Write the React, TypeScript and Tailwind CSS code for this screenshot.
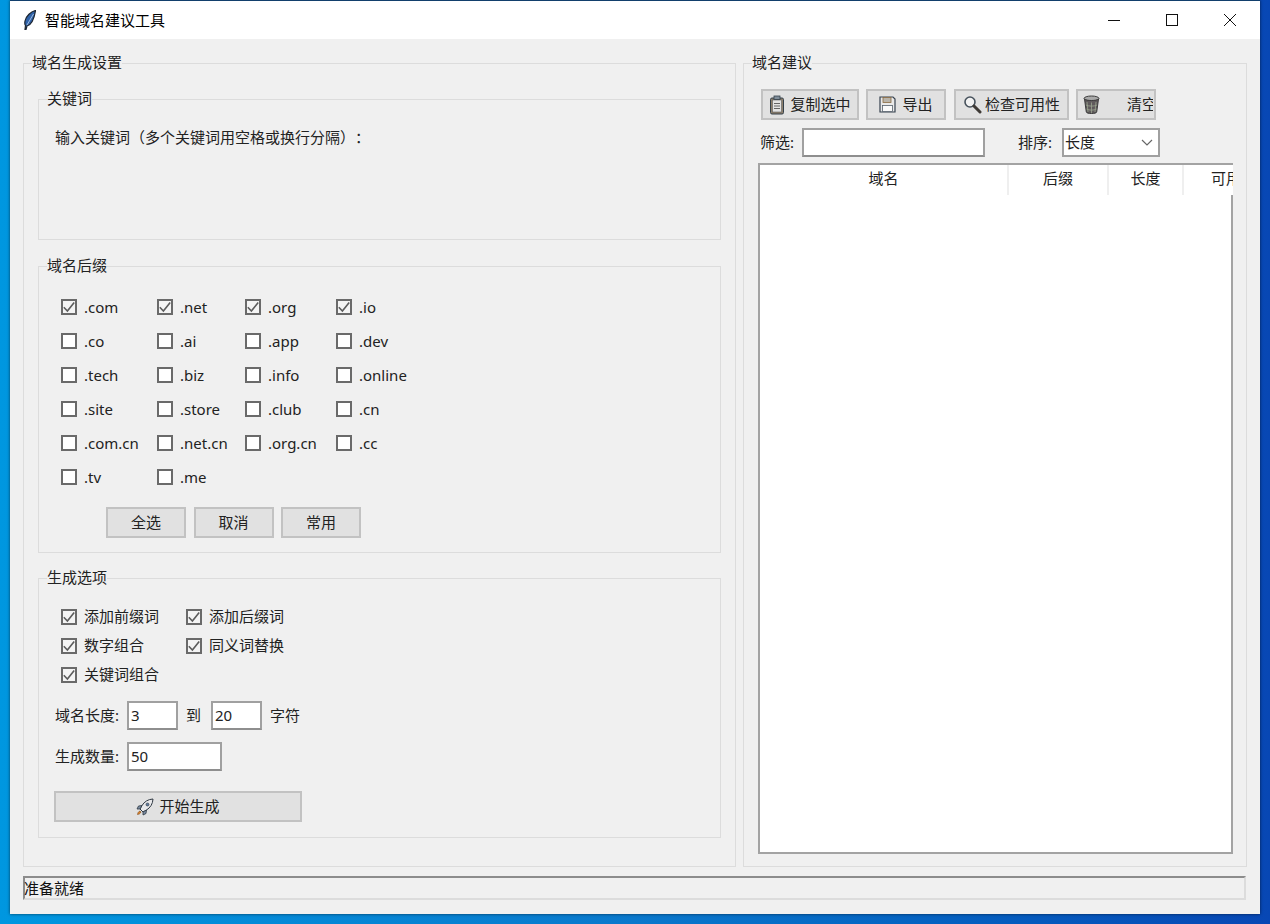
const FONT = { fontFamily: '"Noto Sans", "Noto Sans CJK SC", sans-serif' };

const SUFFIXES = [
  [".com", true], [".net", true], [".org", true], [".io", true],
  [".co", false], [".ai", false], [".app", false], [".dev", false],
  [".tech", false], [".biz", false], [".info", false], [".online", false],
  [".site", false], [".store", false], [".club", false], [".cn", false],
  [".com.cn", false], [".net.cn", false], [".org.cn", false], [".cc", false],
  [".tv", false], [".me", false],
] as [string, boolean][];

const Group = ({ title, className, children }: { title: string; className: string; children?: React.ReactNode }) => (
  <div className={`relative border border-[#dcdcdc] ${className}`}>
    <span className="absolute -top-[12px] left-2 bg-[#f0f0f0] text-[15px] leading-5 text-[#222]">{title}</span>
    {children}
  </div>
);

const Check = ({ label, checked }: { label: string; checked: boolean }) => (
  <label className="flex items-center gap-[7px] text-[15px] text-[#222]">
    <span className={`flex h-4 w-4 shrink-0 items-center justify-center border-2 border-[#6a6a6a] ${checked ? "bg-[#f4f4f4]" : "bg-white"}`}>
      {checked && (
        <svg width="12" height="12" viewBox="0 0 12 12" fill="none" stroke="#5c5c5c" strokeWidth="1.6">
          <path d="M.8 6.200 4.400 10 11.200 1.600" />
        </svg>
      )}
    </span>
    {label}
  </label>
);

const Btn = ({ className, children }: { className: string; children: React.ReactNode }) => (
  <div className={`flex items-center justify-center border-2 border-[#c2c2c2] bg-[#e1e1e1] text-[15px] text-[#222] ${className}`}>{children}</div>
);

const Input = ({ value, className }: { value?: string; className: string }) => (
  <div className={`flex items-center border-2 border-[#a0a0a0] border-b-[#8e8e8e] bg-white pl-[2px] text-[15px] text-[#222] ${className}`}>{value}</div>
);

const Feather = () => (
  <svg width="12" height="20" viewBox="0 0 12 20">
    <path d="M11.500 .5C7 1.500 2 6 1 11c-.4 2-.2 3.500.5 4.500L1 19.500h1l1-3.500c3.500-1 7-6 8.500-15.500z" fill="#2f62a8" stroke="#1c2530" strokeWidth="1.200" />
    <path d="M9.500 4 3 15" stroke="#9dbbe2" strokeWidth="1" />
  </svg>
);

const ClipboardIcon = () => (
  <svg width="16" height="20" viewBox="0 0 16 20">
    <rect x="1.500" y="3" width="13" height="16" rx="1.500" fill="#8d7f6c" stroke="#34404a" />
    <rect x="3.500" y="5" width="9" height="12" fill="#e4e4e4" stroke="#5f5f5f" strokeWidth=".6" />
    <rect x="5" y="1" width="6" height="3.500" fill="#7f8d99" stroke="#34404a" strokeWidth=".8" />
    <path d="M5 8.500h6M5 11h6M5 13.500h6" stroke="#555" strokeWidth=".9" />
  </svg>
);

const SaveIcon = () => (
  <svg width="17" height="17" viewBox="0 0 17 17">
    <path d="M1 1h13l2 2v13H1z" fill="#e9e9e9" stroke="#36424f" strokeWidth="1.200" />
    <rect x="4" y="1.500" width="8" height="5" fill="#b9b4aa" stroke="#8a6a40" strokeWidth=".8" />
    <rect x="3.500" y="9.500" width="10" height="6" fill="#fafafa" stroke="#55606c" strokeWidth=".8" />
  </svg>
);

const SearchIcon = () => (
  <svg width="19" height="19" viewBox="0 0 19 19">
    <circle cx="7" cy="7" r="5" fill="#f2f2f2" stroke="#47525c" strokeWidth="1.600" />
    <path d="M11 11l6 6" stroke="#3f3a36" strokeWidth="3" strokeLinecap="round" />
  </svg>
);

const TrashIcon = () => (
  <svg width="17" height="19" viewBox="0 0 17 19">
    <ellipse cx="8.500" cy="3.500" rx="7.500" ry="2.500" fill="#a9a9a9" stroke="#3c3c3c" />
    <path d="M1.500 4l1.800 13c.2 1 2.500 1.500 5.200 1.500s5-.5 5.200-1.500L15.500 4c-2 2-12 2-14 0z" fill="#5f5a5c" stroke="#3c3c3c" />
    <path d="M4 7l1 10M8.500 7.500V18M13 7l-1 10M3 10c3 1.500 8 1.500 11 0M3.500 14c3 1.500 7 1.500 10 0" stroke="#9aa58f" strokeWidth=".8" fill="none" />
  </svg>
);

const RocketIcon = () => (
  <svg width="18" height="18" viewBox="0 0 18 18">
    <path d="M17 1c-5 .3-8.500 2.500-11 6.500L4 11l3 3 3.500-2C14.500 9.500 16.700 6 17 1z" fill="#e8e8ea" stroke="#2f3842" />
    <circle cx="11.500" cy="6.500" r="1.500" fill="#5f7a9c" stroke="#2f3842" strokeWidth=".6" />
    <path d="M6 7.500 2.500 8 1 11l3 0zM10.500 12l-.5 3.500L7 17l0-3z" fill="#7d8ea4" stroke="#2f3842" strokeWidth=".8" />
    <path d="M4 13c-1.500.5-2.300 1.800-2.500 3.500C3.200 16.300 4.500 15.500 5 14z" fill="#d9822b" stroke="#7a4a20" strokeWidth=".6" />
  </svg>
);

export default function App() {
  return (
    <div className="h-[924px] w-[1270px] overflow-hidden bg-gradient-to-r from-[#0097e0] via-[#0a78cc] to-[#0847b4] pl-[10px]" style={FONT}>
      <div className="flex h-[914px] w-[1250px] flex-col border-t border-[#123f6c] bg-[#f0f0f0] shadow-[0_0_3px_rgba(0,0,0,0.6)]">
        {/* title bar */}
        <div className="flex h-[38px] shrink-0 items-center bg-white">
          <div className="ml-[14px] mr-[9px] flex w-3 justify-center"><Feather /></div>
          <span className="text-[15px] text-black">智能域名建议工具</span>
          <div className="ml-auto mr-px flex h-full items-center">
            <div className="flex w-[58px] justify-center">
              <svg width="12" height="12" viewBox="0 0 12 12"><path d="M0 6.500h12" stroke="#111" /></svg>
            </div>
            <div className="flex w-[58px] justify-center">
              <svg width="12" height="12" viewBox="0 0 12 12"><rect x=".5" y=".5" width="11" height="11" fill="none" stroke="#111" /></svg>
            </div>
            <div className="flex w-[58px] justify-center">
              <svg width="12" height="12" viewBox="0 0 12 12"><path d="M0 0l12 12M12 0 0 12" stroke="#111" /></svg>
            </div>
          </div>
        </div>

        <div className="flex flex-1 flex-col px-[13px] pt-6">
          <div className="flex h-[804px] gap-[7px]">
            {/* left column */}
            <Group title="域名生成设置" className="w-[713px] px-[14px] pt-[35px]">
              <Group title="关键词" className="h-[141px]">
                <p className="pl-4 pt-[27px] text-[15px] leading-5 text-[#222] [text-spacing-trim:space-all]">输入关键词（多个关键词用空格或换行分隔）：</p>
              </Group>

              <Group title="域名后缀" className="mt-[26px] h-[287px] pt-[23px] pl-[22px]">
                <div className="grid grid-cols-[96px_88px_91px_120px] auto-rows-[34px] items-center">
                  {SUFFIXES.map(([name, on]) => <Check key={name} label={name} checked={on} />)}
                </div>
                <div className="ml-[45px] mt-[13px] flex gap-[7.500px]">
                  <Btn className="h-[31px] w-20">全选</Btn>
                  <Btn className="h-[31px] w-20">取消</Btn>
                  <Btn className="h-[31px] w-20">常用</Btn>
                </div>
              </Group>

              <Group title="生成选项" className="mt-[25px] h-[260px] pl-4 pt-[23px]">
                <div className="ml-[6px] grid grid-cols-[125px_130px] auto-rows-[29px] items-center">
                  <Check label="添加前缀词" checked />
                  <Check label="添加后缀词" checked />
                  <Check label="数字组合" checked />
                  <Check label="同义词替换" checked />
                  <Check label="关键词组合" checked />
                </div>
                <div className="mt-[12px] flex h-[29px] items-center text-[15px] text-[#222]">
                  <span className="w-[72px]">域名长度:</span>
                  <Input value="3" className="h-[29px] w-[51px]" />
                  <span className="w-[33px] pl-2">到</span>
                  <Input value="20" className="h-[29px] w-[51px]" />
                  <span className="pl-2">字符</span>
                </div>
                <div className="mt-[12px] flex h-[29px] items-center text-[15px] text-[#222]">
                  <span className="w-[72px]">生成数量:</span>
                  <Input value="50" className="h-[29px] w-[95px]" />
                </div>
                <Btn className="-ml-px mt-5 h-[31px] w-[248px] gap-[5px]"><RocketIcon />开始生成</Btn>
              </Group>
            </Group>

            {/* right column */}
            <Group title="域名建议" className="w-[504px] px-[14px] pt-[25px]">
              <div className="ml-[3px] flex gap-[7px]">
                <Btn className="h-[31px] w-[98px] gap-[5px]"><ClipboardIcon />复制选中</Btn>
                <Btn className="h-[31px] w-[80px] gap-[6px]"><SaveIcon />导出</Btn>
                <Btn className="ml-px h-[31px] w-[115px] gap-[3px]"><SearchIcon />检查可用性</Btn>
                <Btn className="h-[31px] w-[80px] justify-start overflow-hidden pl-[5px]"><TrashIcon /><span className="ml-[27px] w-[26px] shrink-0 overflow-hidden whitespace-nowrap">清空</span></Btn>
              </div>
              <div className="mt-2 flex h-[29px] items-center text-[15px] text-[#222]">
                <span className="ml-[2px] w-[42px]">筛选:</span>
                <Input className="h-[29px] w-[183px]" />
                <span className="ml-[33px] w-[44px]">排序:</span>
                <div className="flex h-[29px] w-[98px] items-center justify-between border-2 border-[#a0a0a0] bg-white pl-px pr-[5px]">
                  长度
                  <svg width="12" height="8" viewBox="0 0 12 8" fill="none" stroke="#666" strokeWidth="1.200"><path d="M1 1l5 5 5-5" /></svg>
                </div>
              </div>
              <div className="mt-[6px] h-[691px] w-[475px] border-2 border-r-0 border-[#a3a3a3] bg-white">
                <div className="relative h-full">
                  <div className="flex h-[30px] text-[15px] text-[#222]">
                    <div className="flex w-[249px] items-center justify-center border-r-2 border-[#efefef] pb-[3px]">域名</div>
                    <div className="flex w-[100px] items-center justify-center border-r-2 border-[#efefef] pb-[3px]">后缀</div>
                    <div className="flex w-[75px] items-center justify-center border-r-2 border-[#efefef] pb-[3px]">长度</div>
                    <div className="w-[49px] overflow-hidden whitespace-nowrap pl-[27px] leading-[27px]">可用</div>
                  </div>
                  <div className="absolute bottom-0 right-0 top-[30px] w-[2px] bg-[#a3a3a3]" />
                </div>
              </div>
            </Group>
          </div>

          {/* status bar */}
          <div className="mt-[9px] flex h-6 w-[1223px] items-center border-2 border-[#dcdcdc] border-t-[#8c8c8c] border-l-[#8c8c8c] text-[15px] leading-none text-[#111]">
            <span className="-ml-px">准备就绪</span>
          </div>
        </div>
      </div>
    </div>
  );
}
